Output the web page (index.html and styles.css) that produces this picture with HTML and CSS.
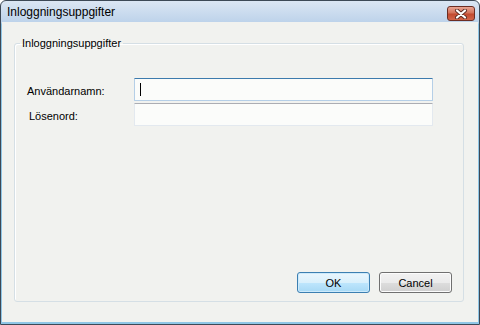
FILE: index.html
```html
<!DOCTYPE html>
<html lang="sv">
<head>
    <meta charset="UTF-8">
    <meta name="viewport" content="width=device-width, initial-scale=1.0">
    <title>Inloggningsuppgifter</title>
    <link rel="stylesheet" href="styles.css">
</head>
<body>
    <div class="window">
        <div class="titlebar">
            <span class="title">Inloggningsuppgifter</span>
            <span class="close" title="Stäng">
                <svg width="14" height="10" viewBox="0 0 14 10">
                    <path d="M3 1.5 L11 8.5 M11 1.5 L3 8.5" stroke="#5a2a22" stroke-width="4" stroke-linecap="round"/>
                    <path d="M3 1.5 L11 8.5 M11 1.5 L3 8.5" stroke="#fff" stroke-width="2.2" stroke-linecap="round"/>
                </svg>
            </span>
        </div>

        <div class="client">
            <fieldset class="group">
                <legend>Inloggningsuppgifter</legend>

                <div class="rows">
                    <label class="lbl" for="user">Användarnamn:</label>
                    <div class="textbox focus" id="user"><span class="caret"></span></div>

                    <label class="lbl indent" for="pass">Lösenord:</label>
                    <div class="textbox" id="pass"></div>
                </div>

                <div class="buttons">
                    <button class="btn default">OK</button>
                    <button class="btn">Cancel</button>
                </div>
            </fieldset>
        </div>
    </div>
</body>
</html>
```

FILE: styles.css
```css
body {
    margin: 0;
    padding: 0;
    font-family: "Liberation Sans", Arial, sans-serif;
    font-size: 11px;
    color: #000;
    background-color: #fff;
}

.window {
    width: 480px;
    height: 325px;
    box-sizing: border-box;
    display: flex;
    flex-direction: column;
    border: 1px solid #3d4956;
    border-radius: 6px 6px 0 0;
    background: linear-gradient(#dbe6f3, #bcd2ea 22px, #8fc6e6 23px);
}

.titlebar {
    height: 21px;
    display: flex;
    align-items: center;
    justify-content: space-between;
    padding: 0 4px 0 6px;
}

.title {
    font-size: 12px;
    color: #000;
    margin-top: 1px;
}

.close {
    width: 26px;
    height: 13px;
    display: flex;
    align-items: center;
    justify-content: center;
    border: 1px solid #6b2d23;
    border-radius: 3px;
    background: linear-gradient(#e9a593, #d3725a 45%, #c24a2f 55%, #d2654a);
    margin-top: 4px;
}

.client {
    flex: 1;
    display: flex;
    flex-direction: column;
    margin: 0 1px 2px 1px;
    background-color: #f1f2ef;
}

.group {
    flex: 1;
    display: flex;
    flex-direction: column;
    margin: 15px 14px 20px 12px;
    padding: 0;
    border: 1px solid #d5dfe5;
    border-radius: 3px;
    box-shadow: inset 1px 1px 0 #fff;
}

.group legend {
    margin-left: 5px;
    padding: 0 2px;
    line-height: 13px;
}

.rows {
    display: grid;
    grid-template-columns: 107px 299px;
    row-gap: 2px;
    align-items: center;
    margin: 28px 0 0 12px;
}

.lbl {
    padding-top: 2px;
}

.indent {
    padding-left: 2px;
}

.textbox {
    height: 23px;
    box-sizing: border-box;
    display: flex;
    align-items: center;
    padding-left: 5px;
    background-color: #fbfcfa;
    border: 1px solid #e3e9ef;
    border-top-color: #abadb3;
    border-radius: 1px;
}

.textbox.focus {
    border-color: #b5cfe7;
    border-top-color: #3d7bad;
}

.caret {
    width: 1px;
    height: 13px;
    background-color: #000;
}

.buttons {
    margin-top: auto;
    display: flex;
    justify-content: flex-end;
    gap: 9px;
    padding: 0 11px 8px 0;
}

.btn {
    width: 73px;
    height: 21px;
    padding: 0;
    font-family: "Liberation Sans", Arial, sans-serif;
    font-size: 11px;
    color: #000;
    border: 1px solid #707070;
    border-radius: 3px;
    background: linear-gradient(#f2f2f2, #ebebeb 50%, #dddddd 51%, #cfcfcf);
    box-shadow: inset 0 0 0 1px #fcfcfc;
}

.btn.default {
    border-color: #3c7fb1;
    background: linear-gradient(#eaf6fd, #d9f0fc 50%, #bee6fd 51%, #a7d9f5);
    box-shadow: inset 0 0 0 1px #cdeafb;
}
```
